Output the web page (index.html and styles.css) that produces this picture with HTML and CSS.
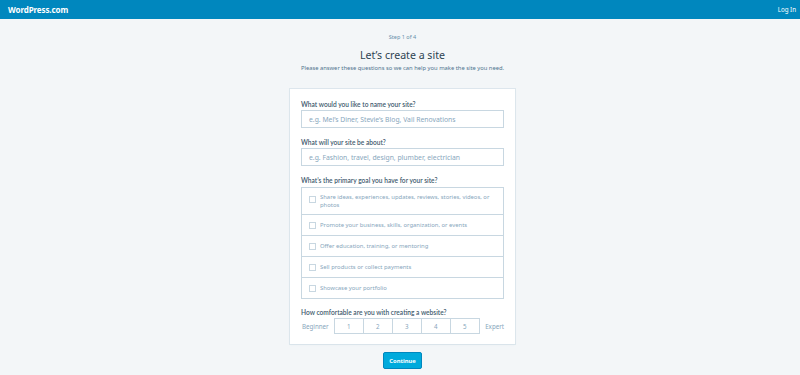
FILE: index.html
```html
<!DOCTYPE html>
<html lang="en">
<head>
<meta charset="utf-8">
<title>Let's create a site</title>
<link rel="stylesheet" href="styles.css">
</head>
<body>
<header class="masterbar">
  <span class="brand">WordPress.com</span>
  <span class="login">Log In</span>
</header>
<main class="main">
  <div class="step">Step 1 of 4</div>
  <h1 class="title">Let’s create a site</h1>
  <p class="subtitle">Please answer these questions so we can help you make the site you need.</p>
  <form class="card">
    <label class="label">What would you like to name your site?</label>
    <div class="input">e.g. Mel’s Diner, Stevie’s Blog, Vail Renovations</div>
    <label class="label">What will your site be about?</label>
    <div class="input">e.g. Fashion, travel, design, plumber, electrician</div>
    <label class="label">What’s the primary goal you have for your site?</label>
    <div class="group">
      <div class="opt tall"><span class="box"></span><span class="opt-text">Share ideas, experiences, updates, reviews, stories, videos, or photos</span></div>
      <div class="opt"><span class="box"></span><span class="opt-text">Promote your business, skills, organization, or events</span></div>
      <div class="opt"><span class="box"></span><span class="opt-text">Offer education, training, or mentoring</span></div>
      <div class="opt"><span class="box"></span><span class="opt-text">Sell products or collect payments</span></div>
      <div class="opt"><span class="box"></span><span class="opt-text">Showcase your portfolio</span></div>
    </div>
    <label class="label label-comfort">How comfortable are you with creating a website?</label>
    <div class="scale">
      <span class="scale-end">Beginner</span>
      <div class="scale-btns">
        <span class="sb">1</span><span class="sb">2</span><span class="sb">3</span><span class="sb">4</span><span class="sb">5</span>
      </div>
      <span class="scale-end">Expert</span>
    </div>
  </form>
  <div class="actions"><button class="continue" type="button">Continue</button></div>
</main>
</body>
</html>
```
FILE: styles.css
```css
* { box-sizing: border-box; }
html, body { margin: 0; padding: 0; }
body {
  background: #f3f6f8;
  font-family: "Noto Sans", "Open Sans", sans-serif;
  color: #2e4453;
  width: 800px;
  height: 375px;
  overflow: hidden;
}
.masterbar {
  height: 19px;
  background: #0087be;
  display: flex;
  align-items: center;
  justify-content: space-between;
  padding: 0 4px 1px 8px;
  color: #fff;
}
.brand { font-weight: 700; font-size: 8px; letter-spacing: -0.1px; }
.login { font-size: 6.2px; }
.main {
  display: flex;
  flex-direction: column;
  align-items: center;
  padding-top: 14px;
  padding-left: 5px;
}
.step { font-size: 5.5px; color: #668eaa; line-height: 8px; height: 8px; }
.title {
  margin: 6px 0 0;
  font-size: 10.6px;
  font-weight: 400;
  line-height: 16px;
  color: #2e4453;
}
.subtitle {
  margin: 1px 0 0;
  font-size: 5.8px;
  line-height: 9px;
  color: #4f748e;
}
.card {
  margin-top: 16px;
  width: 225px;
  background: #fff;
  box-shadow: 0 0 0 1px rgba(200, 215, 225, 0.5), 0 1px 2px #e9eff3;
  padding: 10px 11px 10px 11px;
  display: flex;
  flex-direction: column;
}
.label {
  display: block;
  font-family: "Lato", "Noto Sans", sans-serif;
  font-size: 6.6px;
  font-weight: 600;
  line-height: 10px;
  height: 10px;
  margin-bottom: 1px;
  color: #3d596d;
}
.input {
  height: 18px;
  border: 1px solid #c8d7e1;
  font-size: 6.8px;
  color: #87a6bc;
  display: flex;
  align-items: center;
  padding: 0 7px;
  margin-bottom: 9px;
}
.group {
  border: 1px solid #c8d7e1;
  margin-top: 1px;
  display: flex;
  flex-direction: column;
}
.opt {
  height: 21px;
  display: flex;
  align-items: center;
  padding: 0 10px 0 7px;
  border-top: 1px solid #c8d7e1;
  font-size: 5.9px;
  color: #87a6bc;
}
.opt:first-child { border-top: 0; }
.opt.tall { height: 26px; align-items: flex-start; padding-top: 5px; }
.opt.tall .box { margin-top: 3px; }
.box {
  flex: none;
  width: 7px;
  height: 7px;
  border: 1px solid #c8d7e1;
  margin-right: 4px;
  background: #fff;
}
.opt-text { line-height: 8px; }
.label-comfort { margin-top: 8px; margin-bottom: 1px; }
.scale {
  display: flex;
  align-items: center;
  justify-content: space-between;
  height: 16px;
  padding-left: 1px;
}
.scale-end { font-size: 6.2px; color: #87a6bc; }
.scale-btns { display: flex; border: 1px solid #c8d7e1; height: 16px; width: 146px; }
.sb {
  flex: 1;
  display: flex;
  align-items: center;
  justify-content: center;
  font-size: 6.2px;
  color: #87a6bc;
  border-left: 1px solid #c8d7e1;
}
.sb:first-child { border-left: 0; }
.actions { margin-top: 8px; display: flex; }
.continue {
  width: 39px;
  height: 17px;
  background: #00aadc;
  border: 1px solid #0087be;
  border-radius: 2px;
  color: #fff;
  font-family: inherit;
  font-weight: 700;
  font-size: 5.8px;
  padding: 0;
}
```
